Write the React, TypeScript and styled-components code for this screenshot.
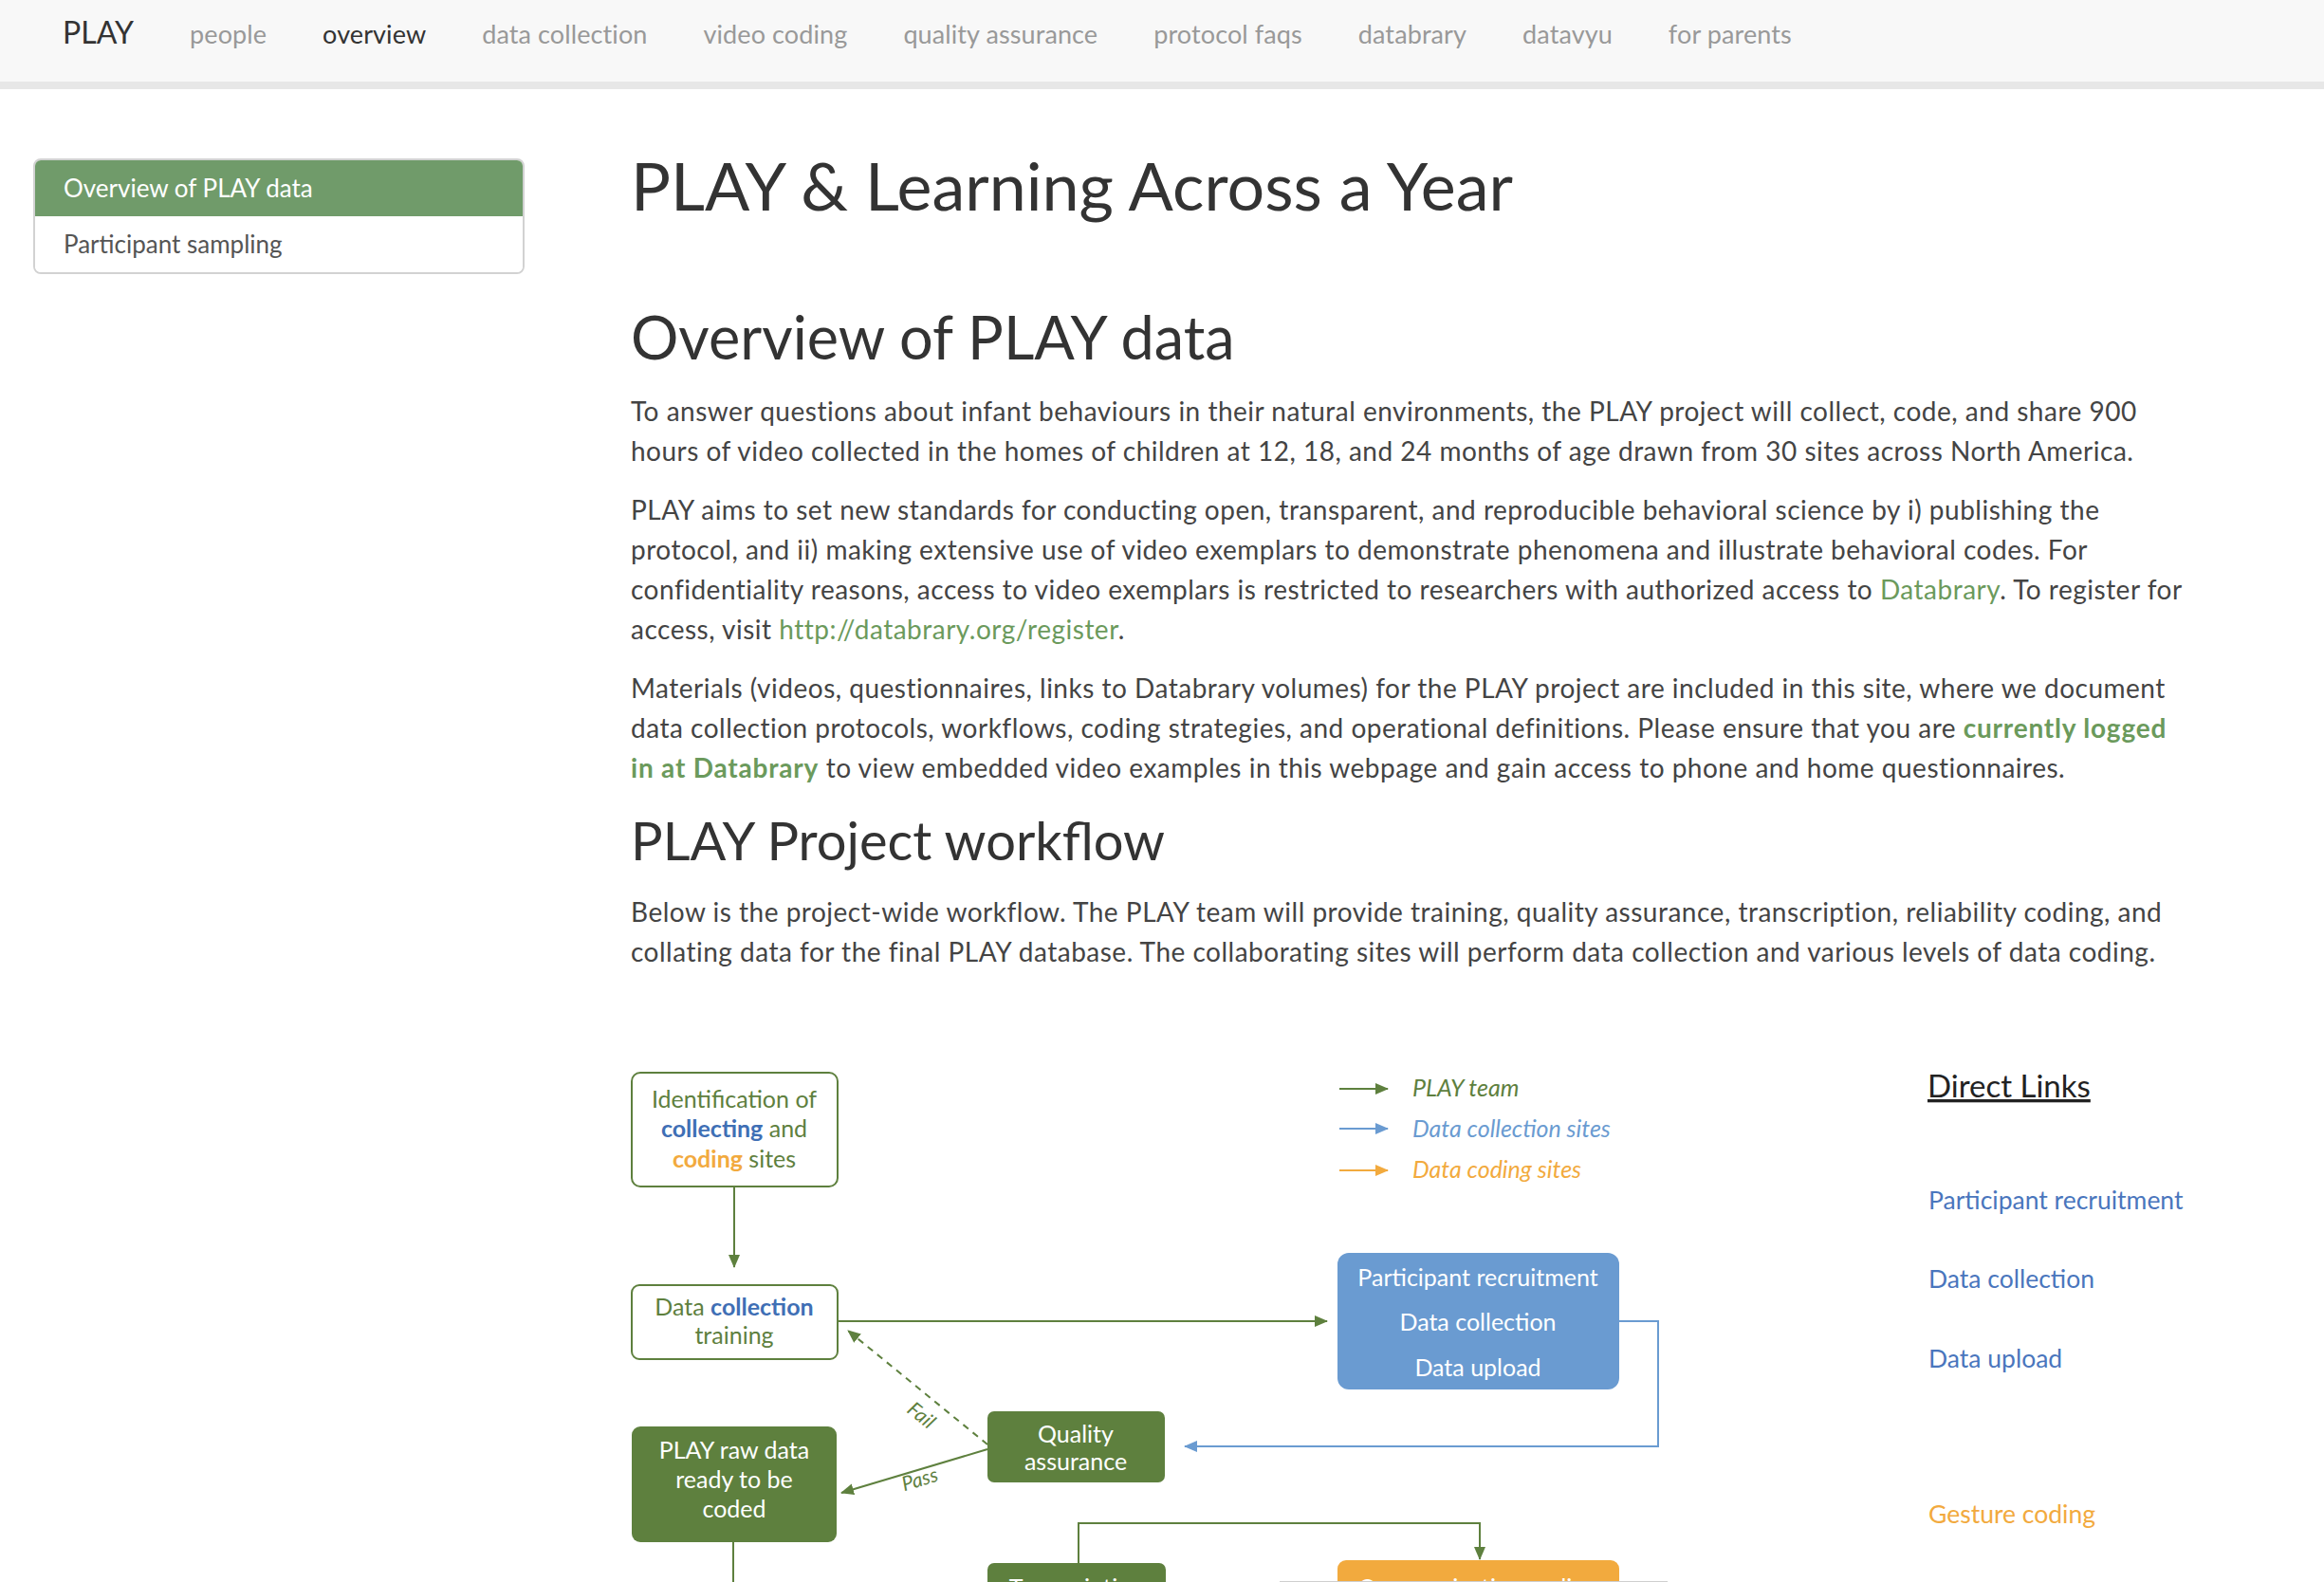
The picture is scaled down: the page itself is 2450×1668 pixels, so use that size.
import styled, { createGlobalStyle } from "styled-components";

const GlobalStyle = createGlobalStyle`
  html, body { margin: 0; padding: 0; background: #fff; }
  body { font-family: Lato, "Open Sans", sans-serif; color: #444; }
`;

const NavBar = styled.nav`
  height: 72px;
  padding: 14px 0 0 66px;
  background: #f8f8f8;
  border-bottom: 8px solid #e7e7e7;
  display: flex;
  align-items: baseline;
  gap: 59px;
`;

const Brand = styled.a`
  font-size: 32px;
  line-height: 40px;
  color: #333;
  text-decoration: none;
`;

const NavLink = styled.a<{ $active?: boolean }>`
  font-size: 27px;
  line-height: 40px;
  letter-spacing: 0.1px;
  color: ${(p) => (p.$active ? "#333" : "#999")};
  text-decoration: none;
`;

const Page = styled.div`
  display: flex;
  align-items: flex-start;
  padding: 63px 0 0 35px;
`;

const Sidebar = styled.ul`
  list-style: none;
  margin: 10px 112px 0 0;
  padding: 0;
  width: 518px;
  box-sizing: border-box;
  border: 2px solid #d2d2d2;
  border-radius: 8px;
  overflow: hidden;
  flex-shrink: 0;
`;

const SideItem = styled.li<{ $active?: boolean }>`
  height: 59px;
  line-height: 59px;
  padding: 0 30px;
  font-size: 26px;
  background: ${(p) => (p.$active ? "#709b6a" : "#fff")};
  color: ${(p) => (p.$active ? "#fff" : "#555")};
`;

const Main = styled.main`
  width: 1650px;
  flex-shrink: 0;
`;

const Title = styled.h1`
  margin: 0;
  font-size: 70px;
  line-height: 1.1;
  font-weight: 400;
  color: #333;
`;

const SectionTitle = styled.h2`
  margin: 86px 0 23px;
  font-size: 63px;
  line-height: 1.1;
  font-weight: 400;
  color: #333;
`;

const SubTitle = styled.h3`
  margin: 25px 0 23px;
  font-size: 56px;
  line-height: 1.1;
  font-weight: 400;
  color: #333;
`;

const Para = styled.p`
  margin: 0 0 20px;
  font-size: 28px;
  line-height: 42px;
  letter-spacing: 0.5px;
`;

const Link = styled.a<{ $bold?: boolean }>`
  color: #6b9a5c;
  text-decoration: none;
  font-weight: ${(p) => (p.$bold ? 700 : 400)};
  letter-spacing: ${(p) => (p.$bold ? "0.8px" : "0.5px")};
`;

const Diagram = styled.svg`
  display: block;
  margin-top: 97px;
  font-family: Lato, "Open Sans", sans-serif;
`;

const G = "#5e803e";
const B = "#6a9bd1";
const O = "#f2aa3e";
const LB = "#3f6fb5";

const navItems = [
  "people",
  "overview",
  "data collection",
  "video coding",
  "quality assurance",
  "protocol faqs",
  "databrary",
  "datavyu",
  "for parents",
];

function Arrow({ x1, y1, x2, y2, color, dashed }: { x1: number; y1: number; x2: number; y2: number; color: string; dashed?: boolean }) {
  const id = color === G ? "ag" : color === B ? "ab" : "ao";
  return (
    <line
      x1={x1}
      y1={y1}
      x2={x2}
      y2={y2}
      stroke={color}
      strokeWidth={2}
      strokeDasharray={dashed ? "7 6" : undefined}
      markerEnd={`url(#${id})`}
    />
  );
}

function Workflow() {
  return (
    <Diagram width={1650} height={560} viewBox="0 0 1650 560">
      <defs>
        {[
          ["ag", G],
          ["ab", B],
          ["ao", O],
        ].map(([id, c]) => (
          <marker key={id} id={id} markerWidth={14} markerHeight={14} refX={13} refY={7} orient="auto" markerUnits="userSpaceOnUse">
            <path d="M0,1 L14,7 L0,13 Z" fill={c} />
          </marker>
        ))}
      </defs>

      {/* legend */}
      <Arrow x1={747} y1={27} x2={798} y2={27} color={G} />
      <Arrow x1={747} y1={69} x2={798} y2={69} color={B} />
      <Arrow x1={747} y1={113} x2={798} y2={113} color={O} />
      <g fontSize={25} fontStyle="italic">
        <text x={824} y={35} fill={G}>PLAY team</text>
        <text x={824} y={78} fill={B}>Data collection sites</text>
        <text x={824} y={121} fill={O}>Data coding sites</text>
      </g>

      {/* direct links */}
      <text x={1367} y={36} fontSize={33} fill="#222" textDecoration="underline">Direct Links</text>
      <g fontSize={26.5}>
        <text x={1368} y={154} fill="#4a76bd">Participant recruitment</text>
        <text x={1368} y={237} fill="#4a76bd">Data collection</text>
        <text x={1368} y={321} fill="#4a76bd">Data upload</text>
        <text x={1368} y={485} fill={O}>Gesture coding</text>
      </g>

      {/* boxes */}
      <rect x={1} y={10} width={217} height={120} rx={9} fill="#fff" stroke={G} strokeWidth={2} />
      <rect x={1} y={234} width={217} height={78} rx={8} fill="#fff" stroke={G} strokeWidth={2} />
      <rect x={745} y={200} width={297} height={144} rx={12} fill={B} />
      <rect x={376} y={367} width={187} height={75} rx={7} fill={G} />
      <rect x={1} y={383} width={216} height={122} rx={9} fill={G} />
      <rect x={376} y={527} width={188} height={80} rx={7} fill={G} />
      <rect x={745} y={524} width={297} height={80} rx={9} fill={O} />

      <g fontSize={25} textAnchor="middle">
        <text x={109} y={47} fill={G}>Identification of</text>
        <text x={109} y={78}>
          <tspan fill={LB} fontWeight={700}>collecting</tspan>
          <tspan fill={G}> and</tspan>
        </text>
        <text x={109} y={110}>
          <tspan fill={O} fontWeight={700}>coding</tspan>
          <tspan fill={G}> sites</tspan>
        </text>

        <text x={109} y={266}>
          <tspan fill={G}>Data </tspan>
          <tspan fill={LB} fontWeight={700}>collection</tspan>
        </text>
        <text x={109} y={296} fill={G}>training</text>

        <text x={893} y={235} fill="#fff">Participant recruitment</text>
        <text x={893} y={282} fill="#fff">Data collection</text>
        <text x={893} y={330} fill="#fff">Data upload</text>

        <text x={469} y={400} fill="#fff">Quality</text>
        <text x={469} y={429} fill="#fff">assurance</text>

        <text x={109} y={417} fill="#fff">PLAY raw data</text>
        <text x={109} y={448} fill="#fff">ready to be</text>
        <text x={109} y={479} fill="#fff">coded</text>

        <text x={470} y={562} fill="#fff">Transcription</text>
        <text x={893} y={562} fill="#fff">Communication coding</text>
      </g>

      {/* connectors */}
      <Arrow x1={109} y1={130} x2={109} y2={215} color={G} />
      <Arrow x1={218} y1={272} x2={734} y2={272} color={G} />
      <polyline points="1042,272 1083,272 1083,404 600,404" fill="none" stroke={B} strokeWidth={2} />
      <Arrow x1={600} y1={404} x2={584} y2={404} color={B} />
      <Arrow x1={376} y1={402} x2={229} y2={282} color={G} dashed />
      <Arrow x1={376} y1={407} x2={222} y2={453} color={G} />
      <line x1={108} y1={505} x2={108} y2={560} stroke={G} strokeWidth={2} />
      <polyline points="472,527 472,485 895,485 895,510" fill="none" stroke={G} strokeWidth={2} />
      <Arrow x1={895} y1={505} x2={895} y2={523} color={G} />
      <line x1={684} y1={547} x2={1093} y2={547} stroke="#cfcfcf" strokeWidth={2} />
      <Arrow x1={600} y1={553} x2={744} y2={553} color={G} />

      <g fontSize={21} fontStyle="italic" fill={G} textAnchor="middle">
        <text x={305} y={378} transform="rotate(39 305 373)">Fail</text>
        <text x={305} y={446} transform="rotate(-17 305 440)">Pass</text>
      </g>
    </Diagram>
  );
}

export default function App() {
  return (
    <>
      <GlobalStyle />
      <NavBar>
        <Brand href="#">PLAY</Brand>
        {navItems.map((n) => (
          <NavLink key={n} href="#" $active={n === "overview"}>
            {n}
          </NavLink>
        ))}
      </NavBar>
      <Page>
        <Sidebar>
          <SideItem $active>Overview of PLAY data</SideItem>
          <SideItem>Participant sampling</SideItem>
        </Sidebar>
        <Main>
          <Title>PLAY &amp; Learning Across a Year</Title>
          <SectionTitle>Overview of PLAY data</SectionTitle>
          <Para>
            To answer questions about infant behaviours in their natural environments, the PLAY project will collect, code, and share 900 hours of video collected in the homes of children at 12, 18, and 24 months of age drawn from 30 sites across North America.
          </Para>
          <Para>
            PLAY aims to set new standards for conducting open, transparent, and reproducible behavioral science by i) publishing the protocol, and ii) making extensive use of video exemplars to demonstrate phenomena and illustrate behavioral codes. For confidentiality reasons, access to video exemplars is restricted to researchers with authorized access to <Link href="#">Databrary</Link>. To register for access, visit <Link href="#">http://databrary.org/register</Link>.
          </Para>
          <Para>
            Materials (videos, questionnaires, links to Databrary volumes) for the PLAY project are included in this site, where we document data collection protocols, workflows, coding strategies, and operational definitions. Please ensure that you are <Link href="#" $bold>currently logged in at Databrary</Link> to view embedded video examples in this webpage and gain access to phone and home questionnaires.
          </Para>
          <SubTitle>PLAY Project workflow</SubTitle>
          <Para>
            Below is the project-wide workflow. The PLAY team will provide training, quality assurance, transcription, reliability coding, and collating data for the final PLAY database. The collaborating sites will perform data collection and various levels of data coding.
          </Para>
          <Workflow />
        </Main>
      </Page>
    </>
  );
}
